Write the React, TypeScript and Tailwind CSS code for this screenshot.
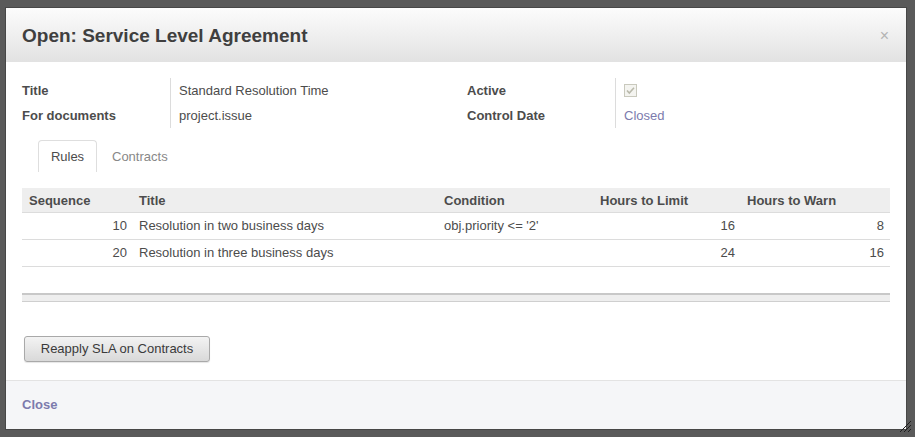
import React from 'react';

const rules = [
  { seq: 10, title: 'Resolution in two business days', condition: "obj.priority <= '2'", limit: 16, warn: 8 },
  { seq: 20, title: 'Resolution in three business days', condition: '', limit: 24, warn: 16 },
];

function Checkbox() {
  return (
    <svg width="13" height="13" viewBox="0 0 13 13" className="block">
      <rect x="0.5" y="0.5" width="12" height="12" fill="#f4f4f0" stroke="#c9c9bd" />
      <path d="M3 6.5 L5.3 9 L10 3.8" fill="none" stroke="#b9b9ab" strokeWidth="1.6" />
    </svg>
  );
}

export default function App() {
  return (
    <div className="relative h-[437px] w-[915px] overflow-hidden bg-[#5a5a5a] pl-[6px] pt-[8px] font-['Liberation_Sans',Arial,sans-serif] text-[13px] text-[#4c4c4c]">
      {/* Modal */}
      <div className="flex h-[421px] w-[900px] flex-col bg-white shadow-[0_0_0_1px_#474747]">
        {/* Header */}
        <div className="flex h-[54px] shrink-0 items-center justify-between bg-gradient-to-b from-[#fcfcfc] to-[#e2e2e2] pl-[16px] pr-[17px] pt-[2px]">
          <h1 className="text-[19px] font-bold text-[#3f3f3f]">Open: Service Level Agreement</h1>
          <span className="text-[16px] leading-none text-[#b4b4b4]">×</span>
        </div>

        {/* Body */}
        <div className="flex-1 px-[16px] pt-[16px]">
          <div className="grid grid-cols-[148px_297px_148px_1fr]">
            <div className="flex h-[25px] items-center font-bold">Title</div>
            <div className="flex h-[25px] items-center border-l border-[#dcdcdc] pl-[8px]">Standard Resolution Time</div>
            <div className="flex h-[25px] items-center font-bold">Active</div>
            <div className="flex h-[25px] items-center border-l border-[#dcdcdc] pl-[8px]">
              <Checkbox />
            </div>
            <div className="flex h-[25px] items-center font-bold">For documents</div>
            <div className="flex h-[25px] items-center border-l border-[#dcdcdc] pl-[8px]">project.issue</div>
            <div className="flex h-[25px] items-center font-bold">Control Date</div>
            <div className="flex h-[25px] items-center border-l border-[#dcdcdc] pl-[8px] text-[#7c7bad]">Closed</div>
          </div>

          {/* Tabs */}
          <div className="mt-[12px] flex pl-[16px]">
            <div className="flex h-[32px] w-[59px] items-center justify-center rounded-t-[4px] border border-b-0 border-[#dedede] pt-[1px] text-[#4c4c4c]">
              Rules
            </div>
            <div className="flex h-[32px] items-center pl-[15px] pt-[1px] text-[#888]">Contracts</div>
          </div>

          {/* Rules table */}
          <table className="mt-[16px] w-[868px] table-fixed border-collapse">
            <colgroup>
              <col className="w-[111px]" />
              <col className="w-[305px]" />
              <col className="w-[156px]" />
              <col className="w-[147px]" />
              <col className="w-[149px]" />
            </colgroup>
            <thead>
              <tr className="h-[24px] border-b border-[#dcdcdc] bg-[#eeeeee] text-left font-bold">
                <th className="px-[7px] pt-[1px]">Sequence</th>
                <th className="px-[6px] pt-[1px]">Title</th>
                <th className="px-[6px] pt-[1px]">Condition</th>
                <th className="px-[6px] pt-[1px]">Hours to Limit</th>
                <th className="px-[6px] pt-[1px]">Hours to Warn</th>
              </tr>
            </thead>
            <tbody>
              {rules.map((r) => (
                <tr key={r.seq} className="h-[27px] border-b border-[#dcdcdc]">
                  <td className="px-[6px] text-right">{r.seq}</td>
                  <td className="px-[6px]">{r.title}</td>
                  <td className="px-[6px]">{r.condition}</td>
                  <td className="px-[6px] text-right">{r.limit}</td>
                  <td className="px-[6px] text-right">{r.warn}</td>
                </tr>
              ))}
            </tbody>
          </table>

          {/* Footer of the list */}
          <div className="mt-[26px] h-[9px] w-[868px] border-t-2 border-b border-t-[#c8c8c8] border-b-[#cfcfcf] bg-[#eeeeee]" />

          <button className="ml-[2px] mt-[34px] flex h-[26px] w-[186px] items-center justify-center rounded-[3px] border border-[#a9a9a9] bg-gradient-to-b from-[#f3f3f3] to-[#d9d9d9] text-[13px] text-[#3a3a3a] shadow-[0_1px_1px_rgba(0,0,0,0.1)]">
            Reapply SLA on Contracts
          </button>
        </div>

        {/* Footer */}
        <div className="flex h-[49px] shrink-0 items-center border-t border-[#e3e3e3] bg-[#f5f6f8] px-[16px]">
          <span className="font-bold text-[#7c7bad]">Close</span>
        </div>
      </div>

      {/* resize grip */}
      <svg width="14" height="14" viewBox="0 0 14 14" className="absolute left-[898px] top-[419px]">
        <path d="M2 13 L13 2 M6 13 L13 6 M10 13 L13 10" stroke="#1e1e1e" strokeWidth="1" />
      </svg>
    </div>
  );
}
